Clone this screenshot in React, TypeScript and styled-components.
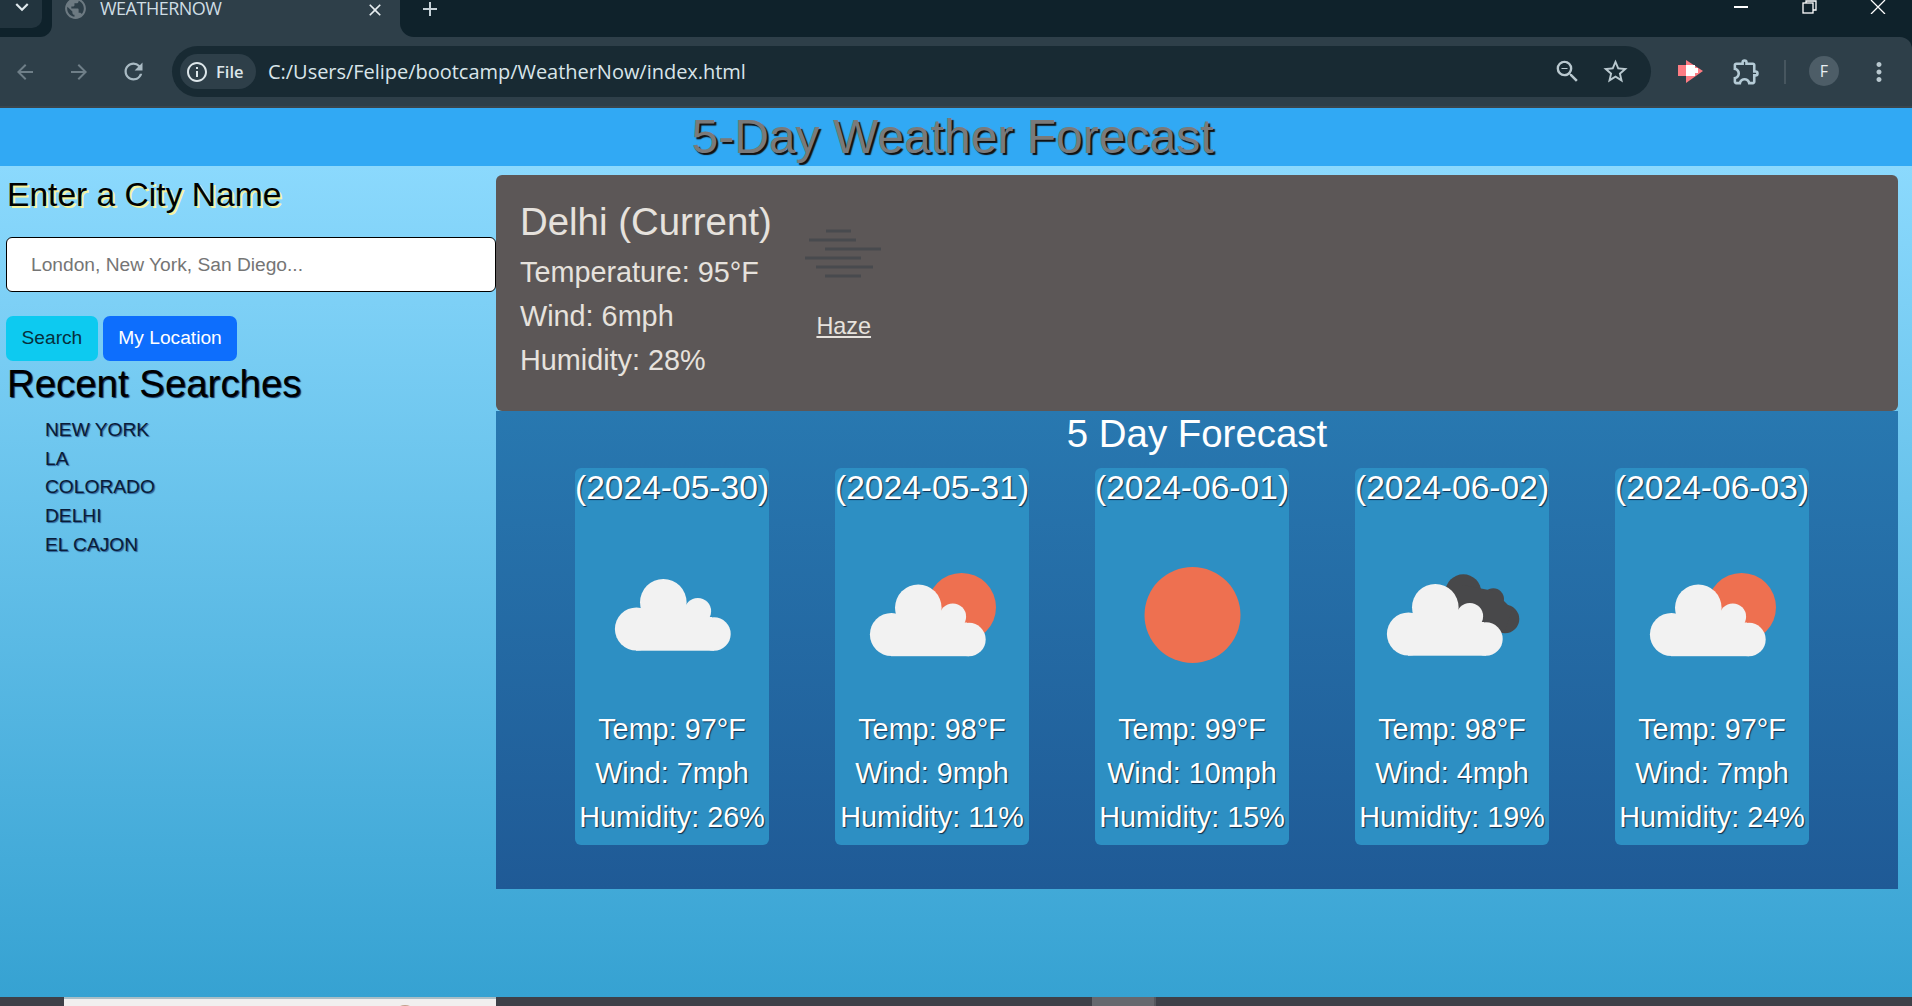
import React from 'react';
import styled, { createGlobalStyle } from 'styled-components';
import {
  MdAdd,
  MdArrowBack,
  MdArrowForward,
  MdClose,
  MdInfoOutline,
  MdKeyboardArrowDown,
  MdMoreVert,
  MdOutlineExtension,
  MdPublic,
  MdRefresh,
  MdStarBorder,
  MdZoomOut,
} from 'react-icons/md';

const GlobalStyle = createGlobalStyle`
  html, body {
    margin: 0;
    padding: 0;
    height: 100%;
    overflow: hidden;
  }
  * {
    box-sizing: border-box;
  }
`;

const Page = styled.div`
  height: 1006px;
  display: flex;
  flex-direction: column;
  font-family: 'Liberation Sans', Arial, sans-serif;
`;

const TabStrip = styled.div`
  height: 37px;
  flex: none;
  display: flex;
  align-items: stretch;
  background: #2e3f49;
  color: #dfe8ec;
  font-family: 'Open Sans', 'Noto Sans', sans-serif;
  overflow: hidden;
`;

const StripStart = styled.div`
  width: 52px;
  flex: none;
  background: #0f222b;
  border-radius: 0 0 12px 0;
`;

const TabSearch = styled.div`
  width: 42px;
  height: 28px;
  display: flex;
  justify-content: center;
  align-items: flex-start;
  padding-left: 2px;
  background: #22343e;
  border-radius: 0 0 10px 0;
  font-size: 26px;
  line-height: 0;
  svg {
    margin-top: -6px;
  }
`;

const Tab = styled.div`
  width: 348px;
  flex: none;
  display: flex;
  align-items: flex-start;
`;

const TabGlobe = styled.span`
  display: flex;
  margin: -4px 0 0 11px;
  font-size: 25px;
  color: #6d7a82;
`;

const TabTitle = styled.span`
  width: 265px;
  margin-left: 12px;
  font-size: 18px;
  line-height: 16px;
  letter-spacing: -0.5px;
  color: #cfdde4;
`;

const TabClose = styled.span`
  display: flex;
  font-size: 20px;
  color: #e8eef1;
`;

const StripRest = styled.div`
  flex: 1;
  display: flex;
  align-items: flex-start;
  background: #0f222b;
  border-radius: 0 0 0 14px;
`;

const NewTab = styled.span`
  display: flex;
  margin: -3px 0 0 18px;
  font-size: 24px;
  color: #c6d2d8;
`;

const WindowControls = styled.div`
  margin-left: auto;
  display: flex;
  align-items: flex-start;
`;

const WindowButton = styled.span`
  width: 68.5px;
  height: 14px;
  display: flex;
  justify-content: center;
  align-items: center;
  color: #fff;
`;

const ToolbarBackdrop = styled.div`
  flex: none;
  background: #0f222b;
`;

const Toolbar = styled.div`
  height: 71px;
  display: flex;
  align-items: flex-start;
  padding-top: 9px;
  background: #2e3f49;
  border-bottom: 2px solid #3a454c;
  border-radius: 0 12px 0 0;
`;

const NavButton = styled.span<{ $dim?: boolean }>`
  width: 50px;
  height: 51px;
  flex: none;
  margin-right: 4px;
  display: flex;
  justify-content: center;
  align-items: center;
  font-size: ${(p) => (p.$dim ? '24px' : '27px')};
  color: ${(p) => (p.$dim ? '#6f7f88' : '#a9bac3')};
`;

const Omnibox = styled.div`
  width: 1479px;
  height: 51px;
  flex: none;
  margin-left: 10px;
  display: flex;
  align-items: center;
  padding: 0 12px 0 8px;
  background: #182a33;
  border-radius: 26px;
  font-family: 'Open Sans', 'Noto Sans', sans-serif;
`;

const SiteChip = styled.div`
  width: 76px;
  height: 35px;
  flex: none;
  display: flex;
  align-items: center;
  padding-left: 5px;
  background: #2e3f49;
  border-radius: 18px;
  color: #dde6ea;
  font-size: 16.5px;
  font-weight: 600;
  gap: 7px;
  svg {
    font-size: 24px;
  }
`;

const UrlText = styled.span`
  margin-left: 12px;
  flex: 1;
  font-size: 20px;
  letter-spacing: -0.03px;
  color: #d9e5ea;
  white-space: nowrap;
`;

const OmniIcon = styled.span`
  width: 48px;
  display: flex;
  justify-content: center;
  font-size: 29px;
  color: #b9c8cf;
`;

const ExtensionSlot = styled.span<{ $gap: number }>`
  width: 48px;
  height: 51px;
  flex: none;
  margin-left: ${(p) => p.$gap}px;
  display: flex;
  justify-content: center;
  align-items: center;
  font-size: 31px;
  color: #b5cbd6;
`;

const Separator = styled.span`
  width: 2px;
  height: 24px;
  flex: none;
  margin: 14px 23px 0 14px;
  background: #47565f;
`;

const Avatar = styled.span`
  width: 30px;
  height: 30px;
  flex: none;
  margin: 10px 25px 0 0;
  display: flex;
  justify-content: center;
  align-items: center;
  border-radius: 50%;
  background: #4d5d67;
  color: #eaf0f3;
  font-family: 'Open Sans', 'Noto Sans', sans-serif;
  font-size: 16px;
`;

const Menu = styled.span`
  width: 30px;
  height: 51px;
  display: flex;
  justify-content: center;
  align-items: center;
  font-size: 30px;
  color: #b9c8cf;
`;

const Header = styled.h1`
  height: 58px;
  flex: none;
  margin: 0;
  padding-right: 7px;
  background: #31a9f4;
  color: #7a7a7a;
  text-align: center;
  font-size: 48px;
  font-weight: 400;
  line-height: 57px;
  text-shadow: 2px 2px 1px #111;
`;

const Content = styled.div`
  flex: 1;
  min-height: 0;
  display: flex;
  background: linear-gradient(#8bd9fd, #36a2d2);
`;

const Sidebar = styled.aside`
  width: 496px;
  flex: none;
  padding: 8px 0 0 6px;
`;

const SearchTitle = styled.h2`
  margin: 0 0 22px 1px;
  font-size: 33.6px;
  font-weight: 400;
  line-height: 41px;
  color: #000;
  text-shadow: 2px 2px 0 #f5f3a0;
`;

const CityInput = styled.input`
  width: 490px;
  height: 55px;
  display: block;
  padding: 0 24px;
  background: #fff;
  border: 1px solid #000;
  border-radius: 6px;
  font-family: inherit;
  font-size: 19.2px;
  &::placeholder {
    color: #757575;
  }
`;

const Buttons = styled.div`
  display: flex;
  gap: 5px;
  margin-top: 24px;
`;

const ActionButton = styled.button<{ $primary?: boolean }>`
  height: 45px;
  padding: 0 15.5px 1px;
  border: 0;
  border-radius: 7px;
  background: ${(p) => (p.$primary ? '#0d6efd' : '#0dcaf0')};
  color: ${(p) => (p.$primary ? '#fff' : '#06303d')};
  font-family: inherit;
  font-size: 19.2px;
`;

const RecentTitle = styled.h2`
  margin: 0 0 0 1px;
  font-size: 38.4px;
  font-weight: 400;
  line-height: 46px;
  color: #000;
  text-shadow: 1px 1px 1px #0a2a5a;
`;

const RecentList = styled.ul`
  margin: 9px 0 0;
  padding: 0 0 0 39px;
  list-style: none;
`;

const RecentItem = styled.li`
  font-size: 19.2px;
  line-height: 28.7px;
  color: #0a1c38;
  text-shadow: 1px 1px 1px #2a5c92;
`;

const Main = styled.main`
  flex: 1;
  min-width: 0;
  display: flex;
  flex-direction: column;
  padding: 9px 14px 0 0;
`;

const CurrentPanel = styled.section`
  height: 236px;
  flex: none;
  display: flex;
  padding: 24px;
  background: #5c5757;
  border-radius: 6px;
  color: #e6e2dd;
`;

const CurrentStats = styled.div`
  flex: none;
`;

const CurrentCity = styled.h2`
  margin: 0 0 5px;
  font-size: 38.4px;
  font-weight: 400;
  line-height: 46px;
`;

const CurrentLine = styled.div`
  font-size: 28.8px;
  line-height: 44px;
`;

const Condition = styled.div`
  width: 144px;
  margin: -18px 0 0 -1px;
  display: flex;
  flex-direction: column;
  align-items: center;
`;

const ConditionLabel = styled.span`
  margin: -13px 0 0 2px;
  font-size: 23.4px;
  line-height: 29px;
  text-decoration: underline;
`;

const Forecast = styled.section`
  height: 478px;
  flex: none;
  background: linear-gradient(#2878b0, #1f5a96);
  color: #fff;
`;

const ForecastTitle = styled.h3`
  margin: 0;
  height: 57px;
  text-align: center;
  font-size: 38.4px;
  font-weight: 400;
  line-height: 46px;
`;

const CardRow = styled.div`
  display: flex;
  gap: 66px;
  padding-left: 79px;
`;

const Card = styled.article`
  width: 194px;
  height: 377px;
  flex: none;
  display: flex;
  flex-direction: column;
  align-items: center;
  background: #2d8fc3;
  border-radius: 6px;
  text-shadow: 1px 1px 1px #10304f;
`;

const CardDate = styled.div`
  margin-bottom: 36px;
  font-size: 33.6px;
  line-height: 39px;
  white-space: nowrap;
`;

const CardLine = styled.div`
  font-size: 28.8px;
  line-height: 44px;
  white-space: nowrap;
`;

const IconSlot = styled.div`
  height: 164px;
  flex: none;
`;

const Taskbar = styled.div`
  height: 9px;
  flex: none;
  display: flex;
  background: #3e4048;
  overflow: hidden;
`;

const PeekWindow = styled.div`
  width: 432px;
  margin-left: 64px;
  padding: 6px 0 0 329px;
  background: #f1efef;
  border-top: 2px solid #a9bec6;
`;

const PeekAvatar = styled.div`
  width: 24px;
  height: 24px;
  border-radius: 50%;
  background: #c49f8a;
`;

const TaskbarButton = styled.div`
  width: 64px;
  margin-left: 596px;
  background: #66686e;
  border-right: 2px solid #55575d;
`;

const CLOUD_WHITE = '#f2f2f2';
const SUN_ORANGE = '#ee7050';
const CLOUD_DARK = '#48484a';

const Cloud = ({ dx, dy }: { dx: number; dy: number }) => (
  <g transform={`translate(${dx} ${dy})`} fill={CLOUD_WHITE}>
    <circle cx="-8.7" cy="-12.7" r="23.3" />
    <circle cx="25.8" cy="-3.8" r="13.3" />
    <circle cx="-35.5" cy="14" r="21.6" />
    <circle cx="42" cy="19" r="16.7" />
    <rect x="-36" y="12" width="78" height="23.7" />
    <rect x="-25" y="-8" width="58" height="24" />
    <rect x="25" y="2" width="15" height="14" />
  </g>
);

const WeatherIcon = ({ kind }: { kind: string }) => (
  <svg width="144" height="144" viewBox="-72 -72 144 144">
    {kind === 'sun' && <circle cx="0.5" cy="0" r="48" fill={SUN_ORANGE} />}
    {kind === 'partly' && (
      <>
        <circle cx="29.7" cy="-7.7" r="34.3" fill={SUN_ORANGE} />
        <Cloud dx={-5} dy={5.5} />
      </>
    )}
    {kind === 'cloud' && <Cloud dx={0} dy={0} />}
    {kind === 'broken' && (
      <>
        <g fill={CLOUD_DARK}>
          <circle cx="11.3" cy="-22.7" r="18" />
          <circle cx="41.3" cy="-16" r="10.7" />
          <circle cx="53" cy="4" r="14.3" />
          <polygon points="11,-30 42,-24 60,-6 52,18 20,16 -2,-10" />
        </g>
        <Cloud dx={-8} dy={5} />
      </>
    )}
  </svg>
);

const HazeIcon = () => (
  <svg width="144" height="144" viewBox="0 0 144 144" stroke="#484a4e" strokeWidth="3">
    <line x1="55" y1="50" x2="80" y2="50" />
    <line x1="38" y1="59" x2="85" y2="59" />
    <line x1="54" y1="68" x2="110" y2="68" />
    <line x1="34" y1="77" x2="90" y2="77" />
    <line x1="45" y1="86" x2="102" y2="86" />
    <line x1="54" y1="95" x2="90" y2="95" />
  </svg>
);

const RecorderIcon = () => (
  <svg width="26" height="24" viewBox="0 0 26 24">
    <polygon points="8,0 25,11 8,23" fill="#fd7c83" />
    <rect x="0" y="5" width="9" height="11" fill="#fd7c83" />
    <rect x="8" y="5" width="9" height="11" fill="#fff" />
    <rect x="17" y="8" width="3" height="5" fill="#fff" />
  </svg>
);

const RestoreIcon = () => (
  <svg width="15" height="14" viewBox="0 0 15 14" fill="none" stroke="#fff" strokeWidth="1.3">
    <rect x="1" y="3" width="10" height="10" fill="#0f222b" />
    <path d="M4 3V1h10v9h-3" />
  </svg>
);

const days = [
  { date: '2024-05-30', icon: 'cloud', temp: 97, wind: 7, humidity: 26 },
  { date: '2024-05-31', icon: 'partly', temp: 98, wind: 9, humidity: 11 },
  { date: '2024-06-01', icon: 'sun', temp: 99, wind: 10, humidity: 15 },
  { date: '2024-06-02', icon: 'broken', temp: 98, wind: 4, humidity: 19 },
  { date: '2024-06-03', icon: 'partly', temp: 97, wind: 7, humidity: 24 },
];

const recent = ['NEW YORK', 'LA', 'COLORADO', 'DELHI', 'EL CAJON'];

const App = () => (
  <Page>
    <GlobalStyle />
    <TabStrip>
      <StripStart>
        <TabSearch>
          <MdKeyboardArrowDown />
        </TabSearch>
      </StripStart>
      <Tab>
        <TabGlobe>
          <MdPublic />
        </TabGlobe>
        <TabTitle>WEATHERNOW</TabTitle>
        <TabClose>
          <MdClose />
        </TabClose>
      </Tab>
      <StripRest>
        <NewTab>
          <MdAdd />
        </NewTab>
        <WindowControls>
          <WindowButton>
            <svg width="14" height="2" viewBox="0 0 14 2">
              <rect width="14" height="2" fill="#fff" />
            </svg>
          </WindowButton>
          <WindowButton>
            <RestoreIcon />
          </WindowButton>
          <WindowButton>
            <svg width="16" height="14" viewBox="0 0 16 14" stroke="#fff" strokeWidth="1.3">
              <path d="M1 0l14 14M15 0L1 14" />
            </svg>
          </WindowButton>
        </WindowControls>
      </StripRest>
    </TabStrip>
    <ToolbarBackdrop>
      <Toolbar>
        <NavButton $dim>
          <MdArrowBack />
        </NavButton>
        <NavButton $dim>
          <MdArrowForward />
        </NavButton>
        <NavButton>
          <MdRefresh />
        </NavButton>
        <Omnibox>
          <SiteChip>
            <MdInfoOutline />
            File
          </SiteChip>
          <UrlText>C:/Users/Felipe/bootcamp/WeatherNow/index.html</UrlText>
          <OmniIcon>
            <MdZoomOut />
          </OmniIcon>
          <OmniIcon>
            <MdStarBorder />
          </OmniIcon>
        </Omnibox>
        <ExtensionSlot $gap={16}>
          <RecorderIcon />
        </ExtensionSlot>
        <ExtensionSlot $gap={7}>
          <MdOutlineExtension />
        </ExtensionSlot>
        <Separator />
        <Avatar>F</Avatar>
        <Menu>
          <MdMoreVert />
        </Menu>
      </Toolbar>
    </ToolbarBackdrop>
    <Header>5-Day Weather Forecast</Header>
    <Content>
      <Sidebar>
        <SearchTitle>Enter a City Name</SearchTitle>
        <CityInput placeholder="London, New York, San Diego..." />
        <Buttons>
          <ActionButton>Search</ActionButton>
          <ActionButton $primary>My Location</ActionButton>
        </Buttons>
        <RecentTitle>Recent Searches</RecentTitle>
        <RecentList>
          {recent.map((city) => (
            <RecentItem key={city}>{city}</RecentItem>
          ))}
        </RecentList>
      </Sidebar>
      <Main>
        <CurrentPanel>
          <CurrentStats>
            <CurrentCity>Delhi (Current)</CurrentCity>
            <CurrentLine>Temperature: 95°F</CurrentLine>
            <CurrentLine>Wind: 6mph</CurrentLine>
            <CurrentLine>Humidity: 28%</CurrentLine>
          </CurrentStats>
          <Condition>
            <HazeIcon />
            <ConditionLabel>Haze</ConditionLabel>
          </Condition>
        </CurrentPanel>
        <Forecast>
          <ForecastTitle>5 Day Forecast</ForecastTitle>
          <CardRow>
            {days.map((day) => (
              <Card key={day.date}>
                <CardDate>({day.date})</CardDate>
                <IconSlot>
                  <WeatherIcon kind={day.icon} />
                </IconSlot>
                <CardLine>Temp: {day.temp}°F</CardLine>
                <CardLine>Wind: {day.wind}mph</CardLine>
                <CardLine>Humidity: {day.humidity}%</CardLine>
              </Card>
            ))}
          </CardRow>
        </Forecast>
      </Main>
    </Content>
    <Taskbar>
      <PeekWindow>
        <PeekAvatar />
      </PeekWindow>
      <TaskbarButton />
    </Taskbar>
  </Page>
);

export default App;
